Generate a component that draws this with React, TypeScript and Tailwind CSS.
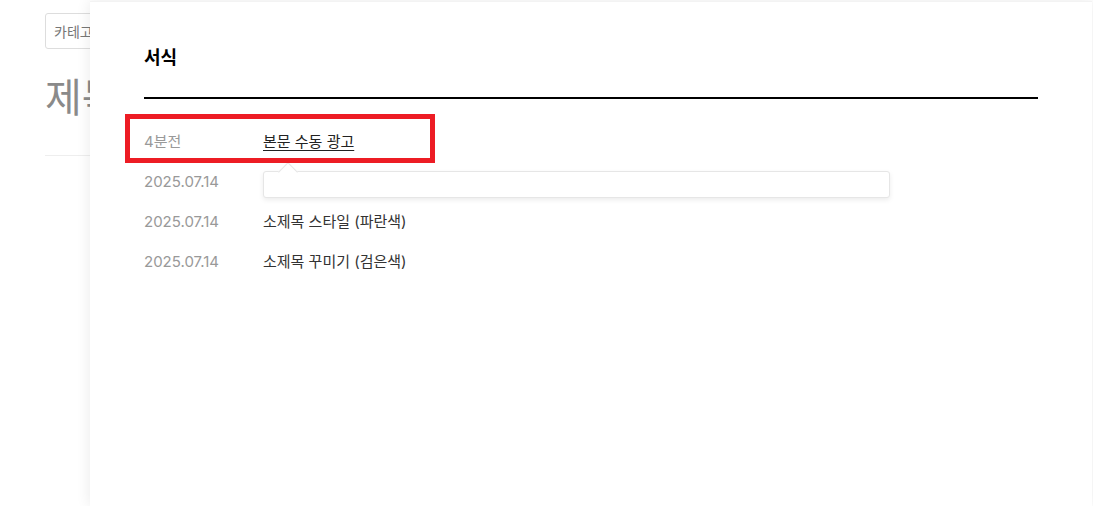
const FONT = 'font-[Inter,"Noto_Sans_CJK_KR",sans-serif]'

const rows = [
  { date: '4분전', title: '본문 수동 광고', active: true },
  { date: '2025.07.14', title: '' },
  { date: '2025.07.14', title: '소제목 스타일 (파란색)' },
  { date: '2025.07.14', title: '소제목 꾸미기 (검은색)' },
]

export default function App() {
  return (
    <div className={`relative w-[1093px] h-[506px] overflow-hidden bg-white ${FONT}`}>
      {/* 뒤쪽 페이지 */}
      <div className="pl-[45px] pt-[13px] w-[300px]">
        <div className="h-[36px] w-[120px] border border-[#dddddd] rounded-[3px] flex items-center px-[8px] text-[14px] text-[#777777]">
          카테고리
        </div>
        <h1 className="mt-[25px] text-[40px] leading-[48px] text-[#8a8a8a]">제목</h1>
        <div className="mt-[33px] border-t border-[#eeeeee]" />
      </div>

      {/* 서식 패널 */}
      <div className="absolute left-[90px] top-[1px] bottom-0 w-[1002px] bg-white border-t border-[#f3f3f3] shadow-[0_0_14px_rgba(0,0,0,0.09)]">
        <div className="px-[54px] pt-[43px]">
          <div className="border-b-2 border-black pb-[26px]">
            <h2 className="text-[18px] font-bold leading-[26px] text-black">서식</h2>
          </div>
          <ul className="mt-[23px] flex flex-col">
            {rows.map((r, i) => (
              <li key={i} className="h-[40px] flex items-center text-[15px]">
                <span className="w-[119px] text-[#999999]">{r.date}</span>
                <span className={r.active ? 'text-[#222222] underline underline-offset-[3px]' : 'text-[#333333]'}>
                  {r.title}
                </span>
              </li>
            ))}
          </ul>
        </div>
      </div>

      {/* 툴팁 */}
      <div className="absolute left-[263px] top-[171px] w-[627px] h-[27px] bg-white border border-[#e6e6e6] rounded-[3px] shadow-[0_2px_5px_rgba(0,0,0,0.08)]">
        <div className="absolute left-[17px] -top-[8px] w-[14px] h-[14px] bg-white border-l border-t border-[#e6e6e6] rotate-45 origin-center translate-y-[1px]" />
      </div>

      {/* 강조 표시 */}
      <div className="absolute left-[125px] top-[114px] w-[310px] h-[49px] border-[5px] border-[#ed1c24]" />
    </div>
  )
}
